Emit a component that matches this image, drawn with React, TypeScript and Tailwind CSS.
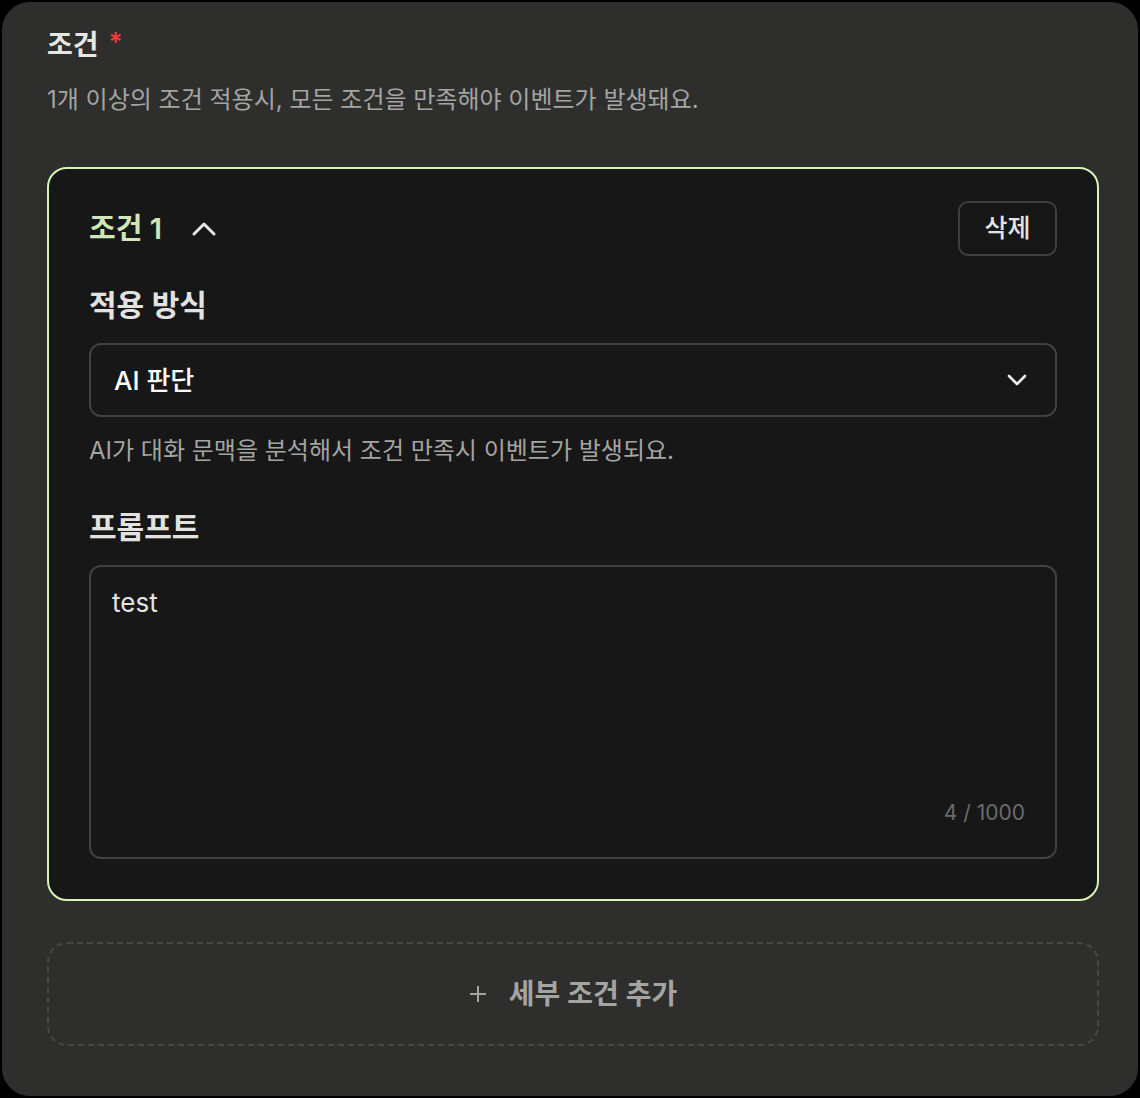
const font = "font-['Inter','Noto_Sans_CJK_KR',sans-serif]";

export default function App() {
  return (
    <div className={`${font} w-[1140px] h-[1098px] bg-black`}>
      <div className="w-full h-full rounded-[30px] border-2 border-black bg-[#2e2e2d] pl-[45px] pr-[39px] pt-[24px]">
        {/* Header */}
        <div className="flex items-start gap-[10px]">
          <h2 className="text-[28px] font-semibold text-[#e6e6e4] leading-[38px]">조건</h2>
          <span className="text-[26px] font-semibold text-[#ef3b3b] leading-[32px]">*</span>
        </div>
        <p className="mt-[20px] text-[24px] text-[#a4a4a2] leading-[32px]">
          1개 이상의 조건 적용시, 모든 조건을 만족해야 이벤트가 발생돼요.
        </p>

        {/* Condition card */}
        <div className="mt-[51px] rounded-[20px] border-2 border-[#d6f2b6] bg-[#171717] px-[40px] pt-[32px] pb-[40px]">
          <div className="flex items-center justify-between">
            <div className="flex items-center gap-[30px]">
              <span className="text-[29px] font-semibold text-[#cfe7b8] leading-[40px]">조건 1</span>
              <svg width="24" height="14" viewBox="0 0 24 14" fill="none" className="text-[#e6e6e4]">
                <path d="M2 12 L12 2 L22 12" stroke="currentColor" strokeWidth="3" strokeLinecap="round" strokeLinejoin="round" />
              </svg>
            </div>
            <button className="w-[99px] h-[55px] rounded-[10px] border-2 border-[#3f3f3f] text-[25px] font-medium text-[#e4e4e4]">
              삭제
            </button>
          </div>

          <div className="mt-[29px] text-[30px] font-semibold text-[#e2e2e0] leading-[40px]">적용 방식</div>
          <div className="mt-[18px] h-[74px] rounded-[12px] border-2 border-[#414141] flex items-center justify-between pl-[23px] pr-[28px]">
            <span className="text-[26px] font-medium text-white">AI 판단</span>
            <svg width="20" height="12" viewBox="0 0 20 12" fill="none" className="text-[#eeeeee]">
              <path d="M2 2 L10 10 L18 2" stroke="currentColor" strokeWidth="2.6" strokeLinecap="round" strokeLinejoin="round" />
            </svg>
          </div>
          <p className="mt-[19px] text-[24px] text-[#a4a4a2] leading-[30px]">
            AI가 대화 문맥을 분석해서 조건 만족시 이벤트가 발생되요.
          </p>

          <div className="mt-[41px] text-[30px] font-semibold text-[#e2e2e0] leading-[40px]">프롬프트</div>
          <div className="mt-[18px] h-[294px] rounded-[12px] border-2 border-[#414141] flex flex-col justify-between pl-[21px] pr-[30px] pt-[18px] pb-[29px]">
            <span className="text-[26px] text-[#e4e4e4] leading-[36px]">test</span>
            <span className="self-end text-[21px] text-[#6b6b6b] leading-[30px]">4 / 1000</span>
          </div>
        </div>

        {/* Add button */}
        <button className="mt-[41px] w-full h-[104px] rounded-[20px] border-2 border-dashed border-[#474746] flex items-center justify-center gap-[22px] text-[#a4a4a2]">
          <svg width="18" height="18" viewBox="0 0 18 18" fill="none">
            <path d="M9 1 V17 M1 9 H17" stroke="currentColor" strokeWidth="2" />
          </svg>
          <span className="text-[28px] font-semibold">세부 조건 추가</span>
        </button>
      </div>
    </div>
  );
}
